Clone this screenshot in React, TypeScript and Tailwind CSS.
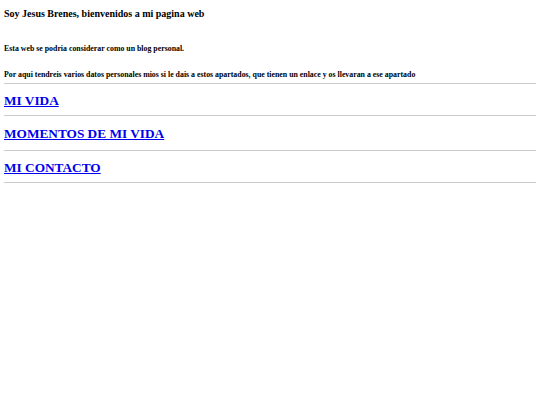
export default function App() {
  const serif = { fontFamily: '"Liberation Serif", "Times New Roman", serif' };

  return (
    <div className="min-h-screen bg-white px-[4px] text-black" style={serif}>
      <h2 className="mt-[8px] text-[10px] leading-[12px] font-bold">
        Soy Jesus Brenes, bienvenidos a mi pagina web
      </h2>

      <p className="mt-[24px] text-[7.85px] leading-[10px] font-bold">
        Esta web se podria considerar como un blog personal.
      </p>
      <p className="mt-[16px] text-[7.85px] leading-[10px] font-bold">
        Por aqui tendreis varios datos personales mios si le dais a estos apartados, que tienen un enlace y os llevaran a ese apartado
      </p>

      <hr className="mt-[3px] border-t border-[#cccccc]" />
      <h1 className="mt-[7px] text-[13.3px] leading-[20px] font-bold">
        <a href="#" className="text-[#0000ee] underline">MI VIDA</a>
      </h1>

      <hr className="mt-[4px] border-t border-[#cccccc]" />
      <h1 className="mt-[8px] text-[13.3px] leading-[20px] font-bold">
        <a href="#" className="text-[#0000ee] underline">MOMENTOS DE MI VIDA</a>
      </h1>

      <hr className="mt-[6px] border-t border-[#cccccc]" />
      <h1 className="mt-[7px] text-[13.3px] leading-[20px] font-bold">
        <a href="#" className="text-[#0000ee] underline">MI CONTACTO</a>
      </h1>

      <hr className="mt-[4px] border-t border-[#cccccc]" />
    </div>
  );
}
